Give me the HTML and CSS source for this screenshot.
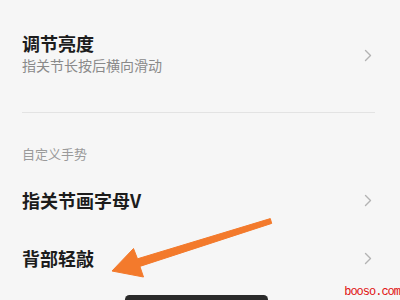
FILE: index.html
```html
<!DOCTYPE html>
<html lang="zh">
<head>
<meta charset="utf-8">
<link rel="stylesheet" href="styles.css">
</head>
<body>
<div class="page">
  <div class="item item-first">
    <div class="texts">
      <div class="title">调节亮度</div>
      <div class="sub">指关节长按后横向滑动</div>
    </div>
    <svg class="chev" width="8" height="13" viewBox="0 0 8 13"><path d="M1.5 1.5 L6.5 6.5 L1.5 11.5" fill="none" stroke="#b3b3b3" stroke-width="1.4" stroke-linecap="round" stroke-linejoin="round"/></svg>
  </div>
  <div class="divider"></div>
  <div class="section">自定义手势</div>
  <div class="item item-second">
    <div class="title">指关节画字母V</div>
    <svg class="chev" width="8" height="13" viewBox="0 0 8 13"><path d="M1.5 1.5 L6.5 6.5 L1.5 11.5" fill="none" stroke="#b3b3b3" stroke-width="1.4" stroke-linecap="round" stroke-linejoin="round"/></svg>
  </div>
  <div class="item item-third">
    <div class="title">背部轻敲</div>
    <svg class="chev" width="8" height="13" viewBox="0 0 8 13"><path d="M1.5 1.5 L6.5 6.5 L1.5 11.5" fill="none" stroke="#b3b3b3" stroke-width="1.4" stroke-linecap="round" stroke-linejoin="round"/></svg>
  </div>
</div>
<svg class="arrow" width="400" height="300" viewBox="0 0 400 300">
  <polygon points="270.3,218.6 137.5,258.8 133.5,248.5 112,271 143.5,277 139.9,266.4 271.7,223.4" fill="#f37a2c" stroke="#f37a2c" stroke-width="1" stroke-linejoin="round"/>
</svg>
<div class="homebar"></div>
<div class="mark">booso.com</div>
</body>
</html>
```
FILE: styles.css
```css
html, body {
  margin: 0;
  padding: 0;
  width: 400px;
  height: 300px;
  overflow: hidden;
  background: #f6f6f6;
  font-family: "Noto Sans CJK SC", "Noto Sans", sans-serif;
}
.page {
  display: flex;
  flex-direction: column;
  padding: 31px 28px 0 22px;
}
.item {
  display: flex;
  align-items: center;
  justify-content: space-between;
}
.texts {
  display: flex;
  flex-direction: column;
}
.title {
  font-size: 18px;
  line-height: 24px;
  font-weight: 700;
  color: #1c1c1c;
}
.sub {
  font-size: 14px;
  line-height: 20px;
  color: #8a8a8a;
}
.chev {
  display: block;
}
.item-first .chev {
  margin-top: 4px;
}
.divider {
  margin-top: 37px;
  height: 1px;
  background: #e3e3e3;
  margin-right: -3px;
}
.section {
  margin-top: 32px;
  font-size: 13px;
  line-height: 18px;
  color: #9a9a9a;
}
.item-second {
  margin-top: 25px;
}
.item-third {
  margin-top: 34px;
}
.arrow {
  position: absolute;
  left: 0;
  top: 0;
}
.homebar {
  position: absolute;
  left: 125px;
  width: 143px;
  top: 295px;
  height: 9px;
  border-radius: 5px;
  background: #2a2a2a;
}
.mark {
  position: absolute;
  right: 0;
  top: 285px;
  font-family: "Liberation Mono", monospace;
  font-size: 12px;
  letter-spacing: -1px;
  line-height: 15px;
  color: #e01010;
}
```
